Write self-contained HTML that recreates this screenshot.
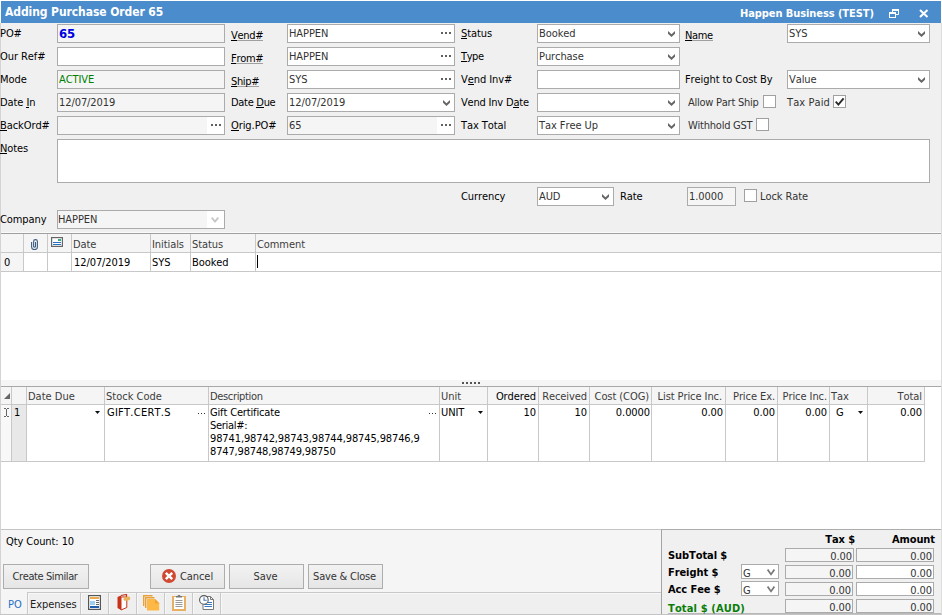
<!DOCTYPE html><html><head><meta charset="utf-8"><title>Adding Purchase Order 65</title><style>
*{box-sizing:border-box;margin:0;padding:0}
html,body{width:942px;height:615px;overflow:hidden}
body{position:relative;background:#f0f0f0;font-kerning:none;letter-spacing:-0.08px;font-family:"DejaVu Sans Condensed","Liberation Sans",sans-serif;font-size:11px;color:#000;line-height:13px}
div,span{position:absolute;white-space:pre}
.t{height:13px;line-height:13px}
.in{border:1px solid #ababab;background:#fff;height:19px}
.dis{background:#f5f5f5}
.in .v{left:1px;top:2px;color:#333}
u{text-decoration:none;border-bottom:1px solid #000;display:inline-block;height:12px;line-height:13px;vertical-align:top}
.ul{border-bottom:1px solid #a0a0a0;height:12px}
.dots{width:10px;height:2px;right:3px;top:7px;background:linear-gradient(90deg,#606060 0 2px,transparent 2px 4px,#606060 4px 6px,transparent 6px 8px,#606060 8px 10px)}
.chev{right:4px;top:6px;width:7px;height:6px}
.cb{width:13px;height:13px;border:1px solid #a0a0a0;background:#fff}
.hd{background:#f5f5f5;color:#3c3c3c}
.vl{width:1px;background:#c8c8c8}
.hl{height:1px;background:#c8c8c8}
.btn{border:1px solid #adadad;background:linear-gradient(#f2f2f2,#e6e6e6);height:25px;text-align:center;line-height:23px;color:#333}
.b{font-weight:bold}
</style></head><body>
<div style="left:0;top:0;width:942px;height:1px;background:#fff"></div>
<div style="left:0;top:0;width:1px;height:23px;background:#fff"></div>
<div style="left:0;top:23px;width:1px;height:592px;background:#d4d4d4"></div>
<div style="left:941px;top:0;width:1px;height:23px;background:#fff"></div>
<div style="left:941px;top:23px;width:1px;height:592px;background:#dcdcdc;z-index:5"></div>
<div style="left:1px;top:1px;width:940px;height:22px;background:#4b8ccc"></div>
<div class="b" style="left:5px;top:4px;font-size:12px;line-height:16px;color:#fff">Adding Purchase Order 65</div>
<div class="b" style="left:740px;top:6px;font-size:11px;line-height:16px;color:#fff">Happen Business (TEST)</div>
<svg style="position:absolute;left:889px;top:9px" width="10" height="9" viewBox="0 0 10 9"><path d="M3.5 3V0.5H9.5V5.5H7" fill="none" stroke="#fff"/><rect x="3" y="0" width="7" height="2" fill="#fff"/><rect x="0.5" y="3.5" width="6" height="5" fill="none" stroke="#fff"/><rect x="0" y="3" width="7" height="2" fill="#fff"/></svg>
<svg style="position:absolute;left:919px;top:9px" width="10" height="9" viewBox="0 0 10 9"><path d="M1 1L8.500 8M8.500 1L1 8" stroke="#fff" stroke-width="2" fill="none"/></svg>
<div class="t " style="left:0px;top:27px;">PO#</div>
<div class="in dis" style="left:57px;top:24px;width:168px;height:19px"><span class="t v" style="font-weight:bold;font-size:13px;color:#0000e0;top:2px">65</span></div>
<div class="t " style="left:0px;top:50px;">Our Ref#</div>
<div class="in" style="left:57px;top:47px;width:168px;height:19px"></div>
<div class="t " style="left:0px;top:73px;">Mode</div>
<div class="in dis" style="left:57px;top:70px;width:168px;height:19px"><span class="t v" style="color:#008000">ACTIVE</span></div>
<div class="t " style="left:0px;top:96px;">Date <u>I</u>n</div>
<div class="in dis" style="left:57px;top:93px;width:168px;height:19px"><span class="t v" style="">12/07/2019</span></div>
<div class="t " style="left:0px;top:119px;"><u>B</u>ackOrd#</div>
<div class="in dis" style="left:57px;top:116px;width:168px;height:19px"><div style="right:0;top:0;width:17px;height:17px;background:#fff"></div><div class="dots"></div></div>
<div class="t ul" style="left:231px;top:29px;letter-spacing:-0.3px"><u>V</u>end#</div>
<div class="in" style="left:287px;top:24px;width:168px;height:19px"><span class="t v" style="">HAPPEN</span><div class="dots"></div></div>
<div class="t ul" style="left:231px;top:52px;letter-spacing:-0.3px"><u>F</u>rom#</div>
<div class="in" style="left:287px;top:47px;width:168px;height:19px"><span class="t v" style="">HAPPEN</span><div class="dots"></div></div>
<div class="t ul" style="left:231px;top:75px;letter-spacing:-0.35px"><u>S</u>hip#</div>
<div class="in" style="left:287px;top:70px;width:168px;height:19px"><span class="t v" style="">SYS</span><div class="dots"></div></div>
<div class="t " style="left:231px;top:96px;letter-spacing:-0.3px">Date <u>D</u>ue</div>
<div class="in" style="left:287px;top:93px;width:168px;height:19px"><span class="t v" style="">12/07/2019</span><svg class="chev" style="position:absolute" viewBox="0 0 7 6"><path d="M0 0L3.5 3.2L7 0V2.8L3.5 6L0 2.8Z" fill="#666"/></svg></div>
<div class="t " style="left:231px;top:119px;"><u>O</u>rig.PO#</div>
<div class="in dis" style="left:287px;top:116px;width:168px;height:19px"><div style="right:0;top:0;width:17px;height:17px;background:#fff"></div><span class="t v" style="">65</span><div class="dots"></div></div>
<div class="t " style="left:461px;top:27px;"><u>S</u>tatus</div>
<div class="in" style="left:537px;top:24px;width:143px;height:19px"><span class="t v" style="">Booked</span><svg class="chev" style="position:absolute" viewBox="0 0 7 6"><path d="M0 0L3.5 3.2L7 0V2.8L3.5 6L0 2.8Z" fill="#666"/></svg></div>
<div class="t " style="left:461px;top:50px;letter-spacing:-0.4px"><u>T</u>ype</div>
<div class="in" style="left:537px;top:47px;width:143px;height:19px"><span class="t v" style="">Purchase</span><svg class="chev" style="position:absolute" viewBox="0 0 7 6"><path d="M0 0L3.5 3.2L7 0V2.8L3.5 6L0 2.8Z" fill="#666"/></svg></div>
<div class="t " style="left:461px;top:73px;">V<u>e</u>nd Inv#</div>
<div class="in" style="left:537px;top:70px;width:143px;height:19px"></div>
<div class="t " style="left:461px;top:96px;letter-spacing:-0.2px">Vend Inv D<u>a</u>te</div>
<div class="in" style="left:537px;top:93px;width:143px;height:19px"><svg class="chev" style="position:absolute" viewBox="0 0 7 6"><path d="M0 0L3.5 3.2L7 0V2.8L3.5 6L0 2.8Z" fill="#666"/></svg></div>
<div class="t " style="left:461px;top:119px;">Tax Total</div>
<div class="in" style="left:537px;top:116px;width:143px;height:19px"><span class="t v" style="">Tax Free Up</span><svg class="chev" style="position:absolute" viewBox="0 0 7 6"><path d="M0 0L3.5 3.2L7 0V2.8L3.5 6L0 2.8Z" fill="#666"/></svg></div>
<div class="t ul" style="left:685px;top:29px;letter-spacing:-0.4px"><u>N</u>ame</div>
<div class="in" style="left:787px;top:24px;width:143px;height:19px"><span class="t v" style="top:2px">SYS</span><svg class="chev" style="position:absolute" viewBox="0 0 7 6"><path d="M0 0L3.5 3.2L7 0V2.8L3.5 6L0 2.8Z" fill="#666"/></svg></div>
<div class="t " style="left:685px;top:73px;">Freight to Cost By</div>
<div class="in" style="left:787px;top:70px;width:143px;height:19px"><span class="t v" style="">Value</span><svg class="chev" style="position:absolute" viewBox="0 0 7 6"><path d="M0 0L3.5 3.2L7 0V2.8L3.5 6L0 2.8Z" fill="#666"/></svg></div>
<div class="t " style="left:688px;top:96px;color:#333;letter-spacing:-0.25px">Allow Part Ship</div>
<div class="cb" style="left:763px;top:95px"></div>
<div class="t " style="left:787px;top:96px;color:#333;letter-spacing:0.1px">Tax Paid</div>
<div class="cb" style="left:833px;top:95px"><svg style="position:absolute;left:0px;top:0px" width="11" height="11" viewBox="0 0 11 11"><path d="M1.7 5.6L4.4 8.6L9.6 2.4" fill="none" stroke="#2a2a2a" stroke-width="1.9"/></svg></div>
<div class="t " style="left:688px;top:119px;color:#333;letter-spacing:-0.23px">Withhold GST</div>
<div class="cb" style="left:756px;top:118px"></div>
<div class="t " style="left:0px;top:142px;"><u>N</u>otes</div>
<div class="in" style="left:57px;top:139px;width:873px;height:44px"></div>
<div class="t " style="left:461px;top:190px;">Currency</div>
<div class="in" style="left:537px;top:187px;width:77px;height:19px"><span class="t v" style="">AUD</span><svg class="chev" style="position:absolute" viewBox="0 0 7 6"><path d="M0 0L3.5 3.2L7 0V2.8L3.5 6L0 2.8Z" fill="#666"/></svg></div>
<div class="t " style="left:620px;top:190px;">Rate</div>
<div class="in dis" style="left:687px;top:187px;width:49px;height:19px"><span class="t v" style="">1.0000</span></div>
<div class="cb" style="left:744px;top:189px"></div>
<div class="t " style="left:760px;top:190px;color:#333">Lock Rate</div>
<div class="t " style="left:0px;top:213px;">Company</div>
<div class="in dis" style="left:57px;top:210px;width:168px;height:19px"><div style="right:0;top:0;width:17px;height:17px;background:#fff"></div><span class="t v" style="left:0">HAPPEN</span></div>
<svg style="position:absolute;left:211px;top:217px;opacity:.35" width="8" height="6" viewBox="0 0 8 6"><path d="M0.7 0.7 L4 4.6 L7.3 0.7" fill="none" stroke="#606060" stroke-width="1.8"/></svg>
<div style="left:1px;top:232px;width:940px;height:1px;background:#fafafa"></div>
<div style="left:1px;top:233px;width:940px;height:1px;background:#a0a0a0"></div>
<div class="hd" style="left:1px;top:234px;width:940px;height:18px"></div>
<div style="left:1px;top:252px;width:940px;height:128px;background:#fff"></div>
<div class="hd" style="left:1px;top:253px;width:22px;height:18px"></div>
<div class="hl" style="left:1px;top:252px;width:940px"></div>
<div class="hl" style="left:1px;top:271px;width:940px"></div>
<div class="vl" style="left:23px;top:234px;height:37px"></div>
<div class="vl" style="left:47px;top:234px;height:37px"></div>
<div class="vl" style="left:71px;top:234px;height:37px"></div>
<div class="vl" style="left:150px;top:234px;height:37px"></div>
<div class="vl" style="left:190px;top:234px;height:37px"></div>
<div class="vl" style="left:255px;top:234px;height:37px"></div>
<div class="t " style="left:73px;top:238px;color:#3c3c3c">Date</div>
<div class="t " style="left:152px;top:238px;color:#3c3c3c">Initials</div>
<div class="t " style="left:192px;top:238px;color:#3c3c3c">Status</div>
<div class="t " style="left:257px;top:238px;color:#3c3c3c">Comment</div>
<div class="t " style="left:4px;top:256px;">0</div>
<div class="t " style="left:74px;top:256px;">12/07/2019</div>
<div class="t " style="left:152px;top:256px;">SYS</div>
<div class="t " style="left:192px;top:256px;">Booked</div>
<div style="left:257px;top:255px;width:1px;height:13px;background:#000"></div>
<svg style="position:absolute;left:31px;top:239px" width="7" height="11" viewBox="0 0 7 11"><path d="M0.600 3V8a2.900 2.600 0 0 0 5.800 0V2.500a1.900 1.900 0 0 0-3.800 0V7.500a1 1 0 0 0 1.900 0V3" fill="none" stroke="#3c5c84" stroke-width="1.100"/></svg>
<svg style="position:absolute;left:51px;top:237px" width="12" height="10" viewBox="0 0 12 10"><rect x="0.600" y="0.600" width="10.800" height="8.800" fill="#fff" stroke="#666" stroke-width="1.200"/><rect x="2" y="5" width="8" height="1" fill="#2a6fc0"/><rect x="2" y="7" width="8" height="1" fill="#2a6fc0"/><rect x="7" y="2" width="3" height="2" fill="#3aaa80"/></svg>
<div style="left:1px;top:380px;width:940px;height:6px;background:#f5f5f5"></div>
<div style="left:462px;top:382px;width:18px;height:2px;background:repeating-linear-gradient(90deg,#555 0 2px,transparent 2px 4px)"></div>
<div style="left:1px;top:386px;width:940px;height:144px;background:#fff"></div>
<div style="left:1px;top:386px;width:940px;height:1px;background:#a8a8a8"></div>
<div class="hd" style="left:1px;top:387px;width:924px;height:17px"></div>
<div class="hl" style="left:1px;top:404px;width:924px"></div>
<div class="hl" style="left:1px;top:461px;width:924px"></div>
<div style="left:12px;top:405px;width:14px;height:56px;background:#e8e8e8"></div>
<div class="vl" style="left:11px;top:387px;height:75px"></div>
<div class="vl" style="left:26px;top:387px;height:75px"></div>
<div class="vl" style="left:104px;top:387px;height:75px"></div>
<div class="vl" style="left:208px;top:387px;height:75px"></div>
<div class="vl" style="left:439px;top:387px;height:75px"></div>
<div class="vl" style="left:487px;top:387px;height:75px"></div>
<div class="vl" style="left:538px;top:387px;height:75px"></div>
<div class="vl" style="left:589px;top:387px;height:75px"></div>
<div class="vl" style="left:651px;top:387px;height:75px"></div>
<div class="vl" style="left:725px;top:387px;height:75px"></div>
<div class="vl" style="left:777px;top:387px;height:75px"></div>
<div class="vl" style="left:829px;top:387px;height:75px"></div>
<div class="vl" style="left:867px;top:387px;height:75px"></div>
<div class="vl" style="left:924px;top:387px;height:75px"></div>
<div class="t " style="left:28px;top:390px;color:#3c3c3c;letter-spacing:0px">Date Due</div>
<div class="t " style="left:106px;top:390px;color:#3c3c3c;letter-spacing:0px">Stock Code</div>
<div class="t " style="left:210px;top:390px;color:#3c3c3c;letter-spacing:-0.34px">Description</div>
<div class="t " style="left:441px;top:390px;color:#3c3c3c;letter-spacing:0px">Unit</div>
<div class="t " style="left:831px;top:390px;color:#3c3c3c;letter-spacing:0px">Tax</div>
<div class="t" style="right:406px;top:390px;">Ordered</div>
<div class="t" style="right:355px;top:390px;color:#3c3c3c">Received</div>
<div class="t" style="right:293px;top:390px;color:#3c3c3c">Cost (COG)</div>
<div class="t" style="right:220px;top:390px;color:#3c3c3c">List Price Inc.</div>
<div class="t" style="right:167px;top:390px;color:#3c3c3c">Price Ex.</div>
<div class="t" style="right:115px;top:390px;color:#3c3c3c">Price Inc.</div>
<div class="t" style="right:20px;top:390px;color:#3c3c3c">Total</div>
<div class="t " style="left:14px;top:406px;">1</div>
<div class="t " style="left:107px;top:406px;letter-spacing:0.25px">GIFT.CERT.S</div>
<div class="t " style="left:441px;top:406px;">UNIT</div>
<div class="t " style="left:836px;top:406px;">G</div>
<div class="t " style="left:210px;top:406px;letter-spacing:-0.15px">Gift Certificate</div>
<div class="t " style="left:210px;top:419px;letter-spacing:-0.3px">Serial#:</div>
<div class="t " style="left:210px;top:432px;letter-spacing:-0.115px">98741,98742,98743,98744,98745,98746,9</div>
<div class="t " style="left:210px;top:445px;letter-spacing:-0.16px">8747,98748,98749,98750</div>
<div class="t" style="right:406px;top:406px;">10</div>
<div class="t" style="right:355px;top:406px;">10</div>
<div class="t" style="right:292px;top:406px;">0.0000</div>
<div class="t" style="right:219px;top:406px;">0.00</div>
<div class="t" style="right:167px;top:406px;">0.00</div>
<div class="t" style="right:115px;top:406px;">0.00</div>
<div class="t" style="right:20px;top:406px;">0.00</div>
<svg style="position:absolute;left:95px;top:411px" width="5" height="3" viewBox="0 0 5 3"><path d="M0 0H5L2.500 3Z" fill="#111"/></svg>
<svg style="position:absolute;left:478px;top:411px" width="5" height="3" viewBox="0 0 5 3"><path d="M0 0H5L2.500 3Z" fill="#111"/></svg>
<svg style="position:absolute;left:858px;top:411px" width="5" height="3" viewBox="0 0 5 3"><path d="M0 0H5L2.500 3Z" fill="#111"/></svg>
<div style="left:198px;top:413px;width:7px;height:1px;background:repeating-linear-gradient(90deg,#333 0 1px,transparent 1px 3px)"></div>
<div style="left:429px;top:413px;width:7px;height:1px;background:repeating-linear-gradient(90deg,#333 0 1px,transparent 1px 3px)"></div>
<div style="left:1px;top:405px;width:10px;height:56px;background:#f8f8f8"></div>
<svg style="position:absolute;left:4px;top:408px" width="5" height="9" viewBox="0 0 5 9"><path d="M0 0.5H2M3 0.5H5M0 8.500H2M3 8.500H5M2.500 1V8" stroke="#666" fill="none"/></svg>
<svg style="position:absolute;left:4px;top:393px" width="6" height="6" viewBox="0 0 6 6"><path d="M6 0V6H0Z" fill="#666"/></svg>
<div style="left:1px;top:529px;width:660px;height:86px;background:#f5f5f5"></div>
<div style="left:1px;top:529px;width:940px;height:1px;background:#c4c4c4"></div>
<div class="t " style="left:6px;top:535px;">Qty Count: 10</div>
<div class="btn" style="left:3px;top:564px;width:86px"><span style="position:static;letter-spacing:-0.4px;padding-right:2px">Create Similar</span></div>
<div class="btn" style="left:150px;top:564px;width:75px"></div>
<svg style="position:absolute;left:162px;top:569px" width="14" height="14" viewBox="0 0 14 14"><circle cx="7" cy="7" r="7" fill="#d04a32"/><path d="M3.800 3.800L10.200 10.200M10.200 3.800L3.800 10.200" stroke="#fff" stroke-width="2.400"/></svg>
<div class="t " style="left:180px;top:570px;color:#333">Cancel</div>
<div class="btn" style="left:229px;top:564px;width:75px"><span style="position:static;padding-right:2px">Save</span></div>
<div class="btn" style="left:308px;top:564px;width:75px"><span style="position:static;letter-spacing:-0.2px;padding-right:2px">Save &amp; Close</span></div>
<div style="left:28px;top:592px;width:633px;height:22px;background:#efefef"></div>
<div class="hl" style="left:27px;top:592px;width:634px;background:#c8c8c8"></div>
<div class="hl" style="left:28px;top:593px;width:633px;background:#f8f8f8"></div>
<div class="vl" style="left:27px;top:592px;height:22px"></div>
<div class="vl" style="left:28px;top:593px;height:21px;background:#f8f8f8"></div>
<div class="vl" style="left:80px;top:592px;height:22px"></div>
<div class="vl" style="left:81px;top:593px;height:21px;background:#f8f8f8"></div>
<div class="vl" style="left:108px;top:592px;height:22px"></div>
<div class="vl" style="left:109px;top:593px;height:21px;background:#f8f8f8"></div>
<div class="vl" style="left:136px;top:592px;height:22px"></div>
<div class="vl" style="left:137px;top:593px;height:21px;background:#f8f8f8"></div>
<div class="vl" style="left:164px;top:592px;height:22px"></div>
<div class="vl" style="left:165px;top:593px;height:21px;background:#f8f8f8"></div>
<div class="vl" style="left:192px;top:592px;height:22px"></div>
<div class="vl" style="left:193px;top:593px;height:21px;background:#f8f8f8"></div>
<div class="vl" style="left:220px;top:592px;height:22px"></div>
<div class="vl" style="left:221px;top:593px;height:21px;background:#f8f8f8"></div>
<div style="left:0;top:614px;width:942px;height:1px;background:#c4c4c4;z-index:6"></div>
<div class="t " style="left:8px;top:598px;color:#1f6fc4">PO</div>
<div class="t " style="left:30px;top:598px;color:#222">Expenses</div>
<svg style="position:absolute;left:88px;top:595px" width="13" height="15" viewBox="0 0 13 15"><rect x="0.6" y="0.6" width="11.8" height="13.8" fill="#fff" stroke="#555" stroke-width="1.2"/><rect x="2" y="2" width="9" height="2" fill="#eaa94a"/><rect x="2" y="6" width="5" height="4" fill="#9fd0f0"/><rect x="8" y="5" width="3" height="1" fill="#666"/><rect x="8" y="7" width="3" height="1" fill="#666"/><rect x="8" y="9" width="3" height="1" fill="#666"/><rect x="2" y="11" width="9" height="2" fill="#1f5fae"/></svg>
<svg style="position:absolute;left:117px;top:594px" width="14" height="17" viewBox="0 0 14 17"><path d="M0.5 3L4 1.5V16L0.5 14Z" fill="#c8321a"/><path d="M4 1.5L9.5 0.5V3" fill="none" stroke="#c8321a" stroke-width="1.2"/><path d="M4 3H9.8V13.5L4 16Z" fill="#fff" stroke="#c8321a" stroke-width="1"/><path d="M6.5 5.5c0-2 1.5-3 3-2.6c1.5-1 3.8-0.4 3.8 1.4c0 1.800-1.800 2.400-3.300 2.200c-1.500 0.600-3.500 0.300-3.500-1z" fill="#eab25a"/></svg>
<svg style="position:absolute;left:143px;top:595px" width="17" height="16" viewBox="0 0 17 16"><path d="M0.700 11V0.700H9.500" fill="none" stroke="#e8a23a" stroke-width="1.400"/><path d="M2.700 13V2.700H11.500" fill="none" stroke="#e8a23a" stroke-width="1.400"/><path d="M4 4H12L16.200 8.200V15.500H4Z" fill="#fdb845"/><path d="M12 4V8.200H16.200Z" fill="#f0a030"/></svg>
<svg style="position:absolute;left:172px;top:595px" width="14" height="16" viewBox="0 0 14 16"><rect x="0" y="1" width="14" height="15" fill="#e8b060"/><rect x="2" y="2" width="10" height="12" fill="#fff"/><path d="M4 2V1H5.500L6.200 0H7.800L8.500 1H10V2.600H4Z" fill="#777"/><rect x="3.500" y="5" width="7" height="1" fill="#999"/><rect x="3.500" y="7" width="7" height="1" fill="#999"/><rect x="3.500" y="9" width="7" height="1" fill="#999"/><rect x="3.500" y="11" width="7" height="1" fill="#999"/></svg>
<svg style="position:absolute;left:198px;top:594px" width="17" height="17" viewBox="0 0 17 17"><path d="M5 2.500H12.500L15.500 5.500V15.500H5Z" fill="#fff" stroke="#777"/><path d="M12.500 2.500V5.500H15.500" fill="none" stroke="#777"/><rect x="9.500" y="8" width="4.500" height="1" fill="#3b78c0"/><rect x="6.500" y="10" width="7.500" height="1" fill="#3b78c0"/><rect x="6.500" y="12" width="7.500" height="1" fill="#3b78c0"/><circle cx="5.900" cy="5.900" r="4.300" fill="#fff" stroke="#555" stroke-width="1.100"/><path d="M6 3.200V6.200H8.700" fill="none" stroke="#3b78c0" stroke-width="1.100"/></svg>
<div style="left:661px;top:529px;width:280px;height:85px;background:#f0f0f0;border-left:1px solid #a4a4a4;border-top:1px solid #acacac"></div>
<div style="left:668px;top:613px;width:273px;height:1px;background:#b8b8b8"></div>
<div class="t" style="right:87px;top:533px;font-weight:bold">Tax $</div>
<div class="t" style="right:7px;top:533px;font-weight:bold">Amount</div>
<div class="t b" style="left:668px;top:549px;color:#000">SubTotal $</div>
<div class="t b" style="left:668px;top:566px;color:#000">Freight $</div>
<div class="t b" style="left:668px;top:583px;color:#000">Acc Fee $</div>
<div class="t b" style="left:668px;top:602px;color:#0a7d0a;letter-spacing:0.15px">Total $ (AUD)</div>
<div class="in dis" style="left:785px;top:548px;width:69px;height:14px"><span class="t" style="right:1px;top:1px;color:#333">0.00</span></div>
<div class="in dis" style="left:856px;top:548px;width:78px;height:14px"><span class="t" style="right:1px;top:1px;color:#333">0.00</span></div>
<div class="in dis" style="left:785px;top:565px;width:68px;height:14px"><span class="t" style="right:1px;top:1px;color:#333">0.00</span></div>
<div class="in" style="left:856px;top:565px;width:78px;height:14px"><span class="t" style="right:1px;top:1px;color:#333">0.00</span></div>
<div class="in dis" style="left:785px;top:582px;width:68px;height:14px"><span class="t" style="right:1px;top:1px;color:#333">0.00</span></div>
<div class="in" style="left:856px;top:582px;width:78px;height:14px"><span class="t" style="right:1px;top:1px;color:#333">0.00</span></div>
<div class="in dis" style="left:785px;top:599px;width:68px;height:14px"><span class="t" style="right:1px;top:1px;color:#333">0.00</span></div>
<div class="in dis" style="left:856px;top:599px;width:78px;height:14px"><span class="t" style="right:1px;top:1px;color:#333">0.00</span></div>
<div class="in" style="left:741px;top:564px;width:38px;height:15px"><span class="t" style="left:1px;top:2px;color:#333">G</span><svg style="position:absolute;right:3px;top:4px" width="8" height="7" viewBox="0 0 8 7"><path d="M0.6 0.6 L4 5.4 L7.4 0.6" fill="none" stroke="#777" stroke-width="1.7"/></svg></div>
<div class="in" style="left:741px;top:581px;width:38px;height:15px"><span class="t" style="left:1px;top:2px;color:#333">G</span><svg style="position:absolute;right:3px;top:4px" width="8" height="7" viewBox="0 0 8 7"><path d="M0.6 0.6 L4 5.4 L7.4 0.6" fill="none" stroke="#777" stroke-width="1.7"/></svg></div>
</body></html>
